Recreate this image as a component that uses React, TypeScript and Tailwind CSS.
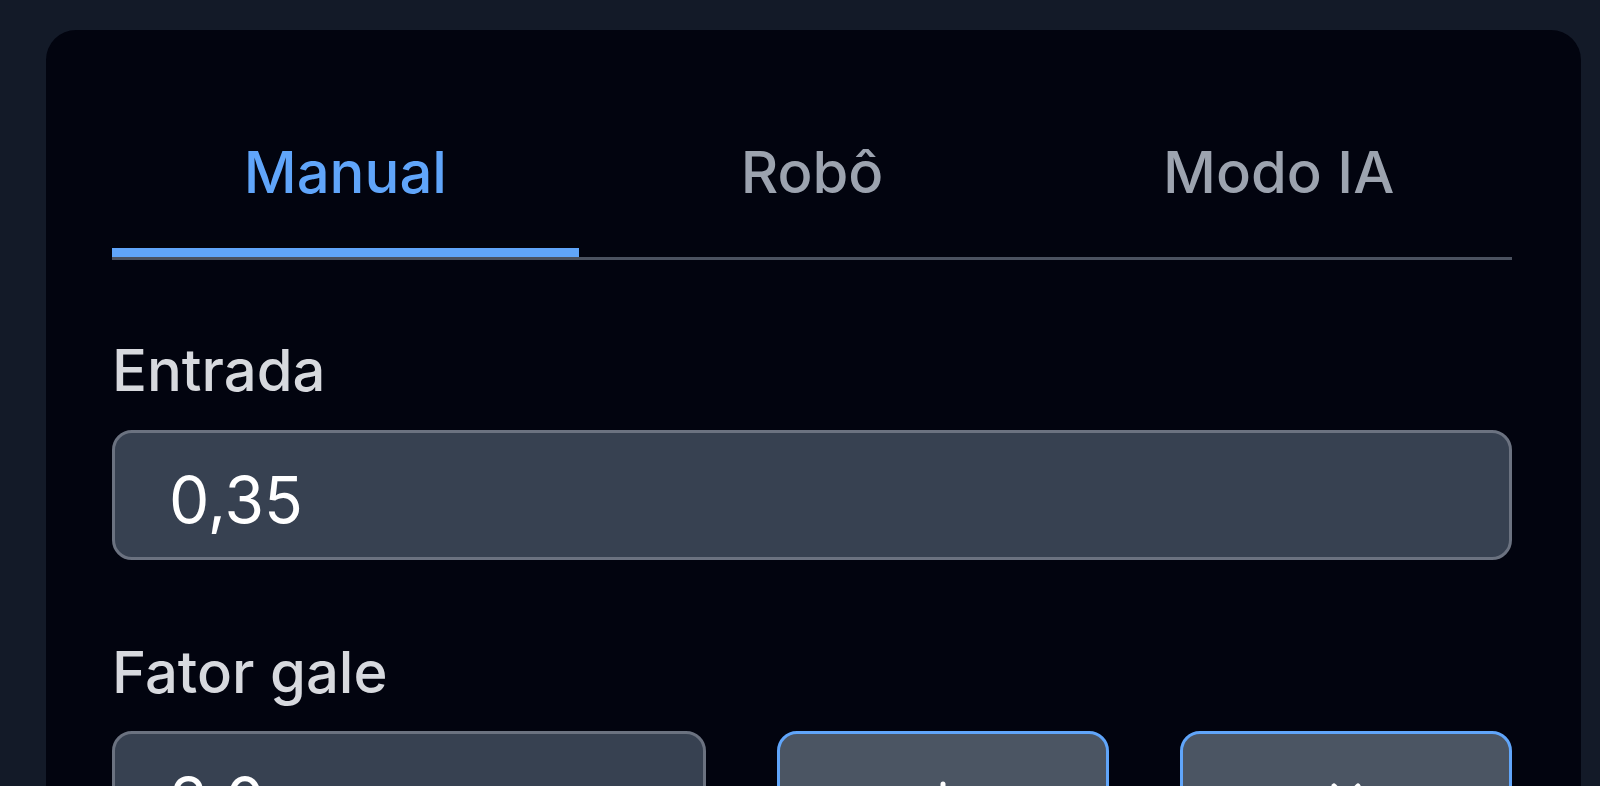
import { useState } from "react";
import { Plus, X } from "lucide-react";

const tabs = ["Manual", "Robô", "Modo IA"];

function App() {
  const [activeTab, setActiveTab] = useState(0);
  const [entrada, setEntrada] = useState("0,35");
  const [fator, setFator] = useState("2,0");

  return (
    <div
      className="h-[786px] w-full overflow-hidden bg-[#131a28] pt-[30px] pl-[46px] pr-[19px]"
      style={{ fontFamily: "Inter, 'Noto Sans', sans-serif" }}
    >
      <div className="rounded-[30px] bg-[#02040f] pl-[66px] pr-[69px] pt-[113px] pb-[80px]">
        {/* Tabs */}
        <div className="flex border-b-[3px] border-[#4b5260]">
          {tabs.map((tab, index) => (
            <button
              key={tab}
              type="button"
              onClick={() => setActiveTab(index)}
              className={`flex-1 pb-[47px] text-[58px] font-medium leading-none ${
                activeTab === index
                  ? "border-b-[9px] border-[#60a5fa] text-[#60a5fa]"
                  : "border-b-[9px] border-transparent text-[#9ca3af]"
              }`}
            >
              {tab}
            </button>
          ))}
        </div>

        {/* Entrada */}
        <section className="mt-[81px]">
          <label className="block text-[58px] font-medium leading-none text-[#d7d9de]">
            Entrada
          </label>
          <input
            type="text"
            value={entrada}
            onChange={(e) => setEntrada(e.target.value)}
            className="mt-[31px] block h-[130px] w-full rounded-[20px] border-[3px] border-[#6b7280] bg-[#374151] pl-[54px] pt-[8px] text-[64px] leading-none text-white outline-none"
          />
        </section>

        {/* Fator gale */}
        <section className="mt-[83px]">
          <label className="block text-[58px] font-medium leading-none text-[#d7d9de]">
            Fator gale
          </label>
          <div className="mt-[30px] grid grid-cols-[594px_1fr_1fr] gap-x-[71px]">
            <input
              type="text"
              value={fator}
              onChange={(e) => setFator(e.target.value)}
              className="block h-[130px] w-full rounded-[20px] border-[3px] border-[#6b7280] bg-[#374151] pl-[54px] pt-[8px] text-[64px] leading-none text-white outline-none"
            />
            <button
              type="button"
              className="flex h-[130px] items-center justify-center rounded-[20px] border-[3px] border-[#60a5fa] bg-[#4b5563] pt-[4px] text-white"
            >
              <Plus size={48} strokeWidth={2.5} />
            </button>
            <button
              type="button"
              className="flex h-[130px] items-center justify-center rounded-[20px] border-[3px] border-[#60a5fa] bg-[#4b5563] pt-[4px] text-white"
            >
              <X size={48} strokeWidth={2.5} />
            </button>
          </div>
        </section>
      </div>
    </div>
  );
}

export default App;
